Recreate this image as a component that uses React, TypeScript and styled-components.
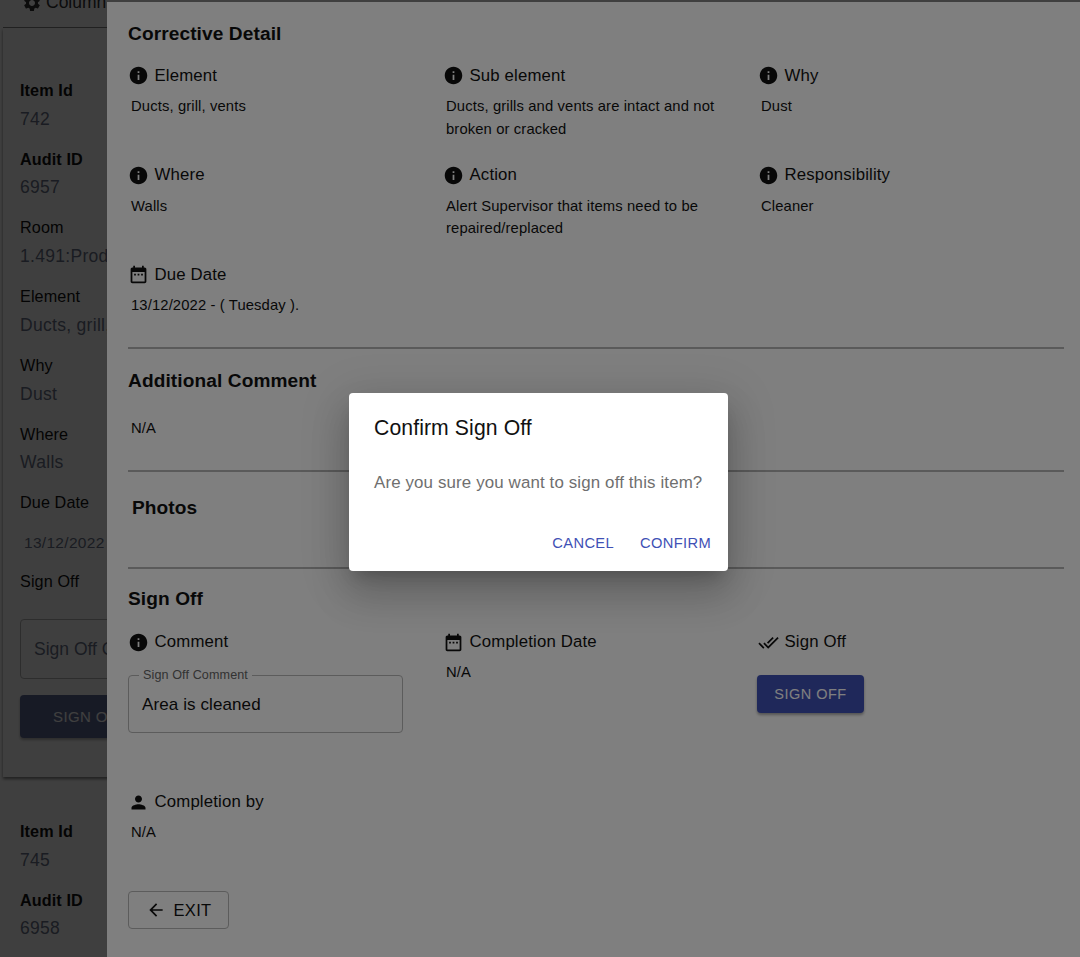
import React from "react";
import styled, { createGlobalStyle } from "styled-components";

const Global = createGlobalStyle`
  html, body { margin: 0; padding: 0; height: 957px; overflow: hidden; background: #fff; }
  body { font-family: "Liberation Sans", Arial, sans-serif; color: #000; }
  #root { height: 957px; }
`;

const Page = styled.div`
  position: relative;
  width: 1080px;
  height: 957px;
  overflow: hidden;
  background: #fff;
`;

const ListColumn = styled.div`
  height: 957px;
  overflow: hidden;
  padding: 0 0 0 3px;
  box-sizing: border-box;
`;

const ToolbarCard = styled.div`
  height: 28px;
  box-sizing: border-box;
  border-bottom: 1px solid #888;
  padding-left: 19px;
  display: flex;
  align-items: flex-end;
  font-size: 17.5px;
  overflow: hidden;
`;

const ToolbarInner = styled.div`
  display: flex;
  align-items: center;
  gap: 4px;
  margin-bottom: 14px;
  color: #333;
`;

const ItemCard = styled.div<{ $last?: boolean }>`
  padding: ${(p) => (p.$last ? "41px" : "49px")} 0 0 17px;
  height: ${(p) => (p.$last ? "auto" : "749px")};
  box-sizing: border-box;
  box-shadow: ${(p) => (p.$last ? "none" : "0 2px 3px rgba(0,0,0,.5)")};
`;

const FieldName = styled.div<{ $bold?: boolean }>`
  font-size: 16.2px;
  line-height: 27.7px;
  letter-spacing: 0.1px;
  font-weight: ${(p) => (p.$bold ? 700 : 400)};
  color: #111;
`;

const FieldValue = styled.div<{ $indent?: boolean }>`
  font-size: 17.5px;
  line-height: 28px;
  margin-bottom: 13px;
  white-space: nowrap;
  letter-spacing: 0.3px;
  color: #6a7288;
  padding-left: ${(p) => (p.$indent ? "4px" : "0")};
`;

const DateValue = styled(FieldValue)`
  font-size: 15.5px;
  margin: 12px 0 11px;
`;

const SignField = styled.div`
  width: 200px;
  height: 60px;
  box-sizing: border-box;
  border: 1px solid #b5b5b5;
  border-radius: 4px;
  padding-left: 13px;
  display: flex;
  align-items: center;
  font-size: 17.5px;
  color: #6a7288;
  white-space: nowrap;
  margin-top: 23px;
  padding-top: 2px;
`;

const SignButton = styled.div`
  width: 200px;
  height: 43px;
  margin-top: 16px;
  border-radius: 4px;
  background: #5f6a96;
  color: #fff;
  font-size: 15px;
  letter-spacing: 0.4px;
  padding-left: 33px;
  display: flex;
  align-items: center;
  box-sizing: border-box;
  box-shadow: 0 2px 3px rgba(0,0,0,.3);
`;

const Scrim = styled.div<{ $level: number }>`
  position: absolute;
  inset: 0;
  background: rgba(0, 0, 0, 0.5);
  z-index: ${(p) => p.$level};
`;

const Drawer = styled.aside`
  position: absolute;
  top: 2px;
  bottom: 0;
  left: 107px;
  right: 0;
  z-index: 2;
  background: #fff;
  padding: 18px 16px 0 21px;
  box-sizing: border-box;
  overflow: hidden;
`;

const SectionTitle = styled.h2<{ $inset?: boolean; $top?: number }>`
  margin: ${(p) => p.$top ?? 0}px 0 0;
  font-size: 19.1px;
  line-height: 28px;
  font-weight: 700;
  letter-spacing: 0.1px;
  color: #111;
  padding-left: ${(p) => (p.$inset ? "4px" : "0")};
`;

const DetailGrid = styled.div`
  display: grid;
  grid-template-columns: 315px 315px 305px;
  grid-template-rows: 99.5px 99.5px auto;
  margin-top: 13.5px;
`;

const SignGrid = styled(DetailGrid)`
  grid-template-rows: 160px auto;
  margin-top: 15px;
`;

const Cell = styled.div`
  display: flex;
  flex-direction: column;
  align-items: flex-start;
`;

const Label = styled.div`
  display: flex;
  align-items: center;
  gap: 6px;
  height: 28px;
  font-size: 16.8px;
  letter-spacing: 0.15px;
  color: #111;
  white-space: nowrap;
`;

const IconSlot = styled.span`
  width: 21px;
  height: 21px;
  display: inline-flex;
  color: #111;
  margin-left: -0.5px;
`;

const Value = styled.div<{ $top?: number }>`
  margin-top: ${(p) => p.$top ?? 5}px;
  padding-left: 3px;
  font-size: 14.8px;
  line-height: 22.5px;
  letter-spacing: 0.12px;
  color: #111;
  max-width: 290px;
`;

const Rule = styled.hr<{ $top: number }>`
  border: 0;
  height: 2px;
  background: #b4b4b4;
  margin: ${(p) => p.$top}px 0 0;
`;

const CommentField = styled.div`
  position: relative;
  width: 275px;
  height: 58px;
  margin-top: 19px;
  box-sizing: border-box;
  border: 1px solid #b8b8b8;
  border-radius: 4px;
  padding: 17px 13px 0;
  font-size: 17px;
  line-height: 24px;
  letter-spacing: 0.1px;
  color: #111;
`;

const FloatLabel = styled.span`
  position: absolute;
  top: -8px;
  left: 10px;
  padding: 0 4px;
  background: #fff;
  font-size: 12.6px;
  line-height: 14px;
  letter-spacing: 0.1px;
  color: #666;
  white-space: nowrap;
`;

const PrimaryButton = styled.button`
  margin: 19px 0 0 -1px;
  width: 107px;
  height: 38px;
  border: 0;
  border-radius: 4px;
  background: #3f51b5;
  color: #fff;
  font-family: inherit;
  font-size: 14.5px;
  letter-spacing: 0.5px;
  box-shadow: 0 2px 3px rgba(0,0,0,.35);
`;

const ExitButton = styled.button`
  margin-top: 47.5px;
  display: flex;
  align-items: center;
  justify-content: center;
  gap: 8px;
  width: 101px;
  height: 38px;
  background: #fff;
  border: 1px solid #b8b8b8;
  border-radius: 4px;
  font-family: inherit;
  font-size: 16.5px;
  letter-spacing: 0.3px;
  color: #111;
`;

const DialogLayer = styled.div`
  position: absolute;
  left: 349px;
  top: 393px;
  z-index: 4;
`;

const Dialog = styled.div`
  width: 379px;
  height: 178px;
  box-sizing: border-box;
  background: #fff;
  border-radius: 4px;
  padding: 21px 17px 0 25px;
  box-shadow: 0 11px 15px -7px rgba(0,0,0,.2), 0 24px 38px 3px rgba(0,0,0,.14), 0 9px 46px 8px rgba(0,0,0,.12);
  display: flex;
  flex-direction: column;
`;

const DialogTitle = styled.div`
  font-size: 21.2px;
  line-height: 28px;
  letter-spacing: 0.1px;
  color: #111;
`;

const DialogText = styled.div`
  margin-top: 27px;
  font-size: 16.9px;
  line-height: 28px;
  letter-spacing: 0.13px;
  color: #6f6f6f;
  white-space: nowrap;
`;

const DialogActions = styled.div`
  margin-top: 36px;
  display: flex;
  justify-content: flex-end;
  gap: 26px;
`;

const TextButton = styled.span`
  font-size: 14.7px;
  line-height: 20px;
  letter-spacing: 0.35px;
  color: #3f51b5;
`;

const InfoIcon = () => (
  <IconSlot>
    <svg viewBox="0 0 24 24" width="21" height="21" fill="currentColor">
      <path d="M12 2C6.48 2 2 6.48 2 12s4.48 10 10 10 10-4.48 10-10S17.52 2 12 2zm1 15h-2v-6h2v6zm0-8h-2V7h2v2z" />
    </svg>
  </IconSlot>
);

const CalendarIcon = () => (
  <IconSlot>
    <svg viewBox="0 0 24 24" width="21" height="21" fill="currentColor">
      <path d="M9 11H7v2h2v-2zm4 0h-2v2h2v-2zm4 0h-2v2h2v-2zm2-7h-1V2h-2v2H8V2H6v2H5c-1.11 0-1.99.9-1.99 2L3 20c0 1.1.89 2 2 2h14c1.1 0 2-.9 2-2V6c0-1.1-.9-2-2-2zm0 16H5V9h14v11z" />
    </svg>
  </IconSlot>
);

const PersonIcon = () => (
  <IconSlot>
    <svg viewBox="0 0 24 24" width="21" height="21" fill="currentColor">
      <path d="M12 12c2.21 0 4-1.79 4-4s-1.79-4-4-4-4 1.79-4 4 1.79 4 4 4zm0 2c-2.67 0-8 1.34-8 4v2h16v-2c0-2.66-5.33-4-8-4z" />
    </svg>
  </IconSlot>
);

const DoneAllIcon = () => (
  <IconSlot>
    <svg viewBox="0 0 24 24" width="21" height="21" fill="currentColor">
      <path d="M18 7l-1.41-1.41-6.34 6.34 1.41 1.41L18 7zm4.24-1.41L11.66 16.17 7.48 12l-1.41 1.41L11.66 19l12-12-1.42-1.41zM.41 13.41L6 19l1.41-1.41L1.83 12 .41 13.41z" />
    </svg>
  </IconSlot>
);

const GearIcon = () => (
  <svg viewBox="0 0 24 24" width="20" height="20" fill="currentColor">
    <path d="M19.14 12.94c.04-.3.06-.61.06-.94 0-.32-.02-.64-.07-.94l2.03-1.58c.18-.14.23-.41.12-.61l-1.92-3.32c-.12-.22-.37-.29-.59-.22l-2.39.96c-.5-.38-1.03-.7-1.62-.94l-.36-2.54c-.04-.24-.24-.41-.48-.41h-3.84c-.24 0-.43.17-.47.41l-.36 2.54c-.59.24-1.13.57-1.62.94l-2.39-.96c-.22-.08-.47 0-.59.22L2.74 8.87c-.12.21-.08.47.12.61l2.03 1.58c-.05.3-.09.63-.09.94s.02.64.07.94l-2.03 1.58c-.18.14-.23.41-.12.61l1.92 3.32c.12.22.37.29.59.22l2.39-.96c.5.38 1.03.7 1.62.94l.36 2.54c.05.24.24.41.48.41h3.84c.24 0 .44-.17.47-.41l.36-2.54c.59-.24 1.13-.56 1.62-.94l2.39.96c.22.08.47 0 .59-.22l1.92-3.32c.12-.22.07-.47-.12-.61l-2.01-1.58zM12 15.6c-1.98 0-3.6-1.62-3.6-3.6s1.62-3.6 3.6-3.6 3.6 1.62 3.6 3.6-1.62 3.6-3.6 3.6z" />
  </svg>
);

const ArrowIcon = () => (
  <svg viewBox="0 0 24 24" width="20" height="20" fill="currentColor">
    <path d="M20 11H7.83l5.59-5.59L12 4l-8 8 8 8 1.41-1.41L7.83 13H20v-2z" />
  </svg>
);

type Detail = { icon: React.ReactNode; label: string; value: string };

const details: Detail[] = [
  { icon: <InfoIcon />, label: "Element", value: "Ducts, grill, vents" },
  { icon: <InfoIcon />, label: "Sub element", value: "Ducts, grills and vents are intact and not broken or cracked" },
  { icon: <InfoIcon />, label: "Why", value: "Dust" },
  { icon: <InfoIcon />, label: "Where", value: "Walls" },
  { icon: <InfoIcon />, label: "Action", value: "Alert Supervisor that items need to be repaired/replaced" },
  { icon: <InfoIcon />, label: "Responsibility", value: "Cleaner" },
  { icon: <CalendarIcon />, label: "Due Date", value: "13/12/2022 - ( Tuesday )." },
];

export default function App() {
  return (
    <Page>
      <Global />
      <ListColumn>
        <ToolbarCard>
          <ToolbarInner>
            <GearIcon />
            Column
          </ToolbarInner>
        </ToolbarCard>
        <ItemCard>
          <FieldName $bold>Item Id</FieldName>
          <FieldValue>742</FieldValue>
          <FieldName $bold>Audit ID</FieldName>
          <FieldValue>6957</FieldValue>
          <FieldName>Room</FieldName>
          <FieldValue>1.491:Production</FieldValue>
          <FieldName>Element</FieldName>
          <FieldValue>Ducts, grill, vents</FieldValue>
          <FieldName>Why</FieldName>
          <FieldValue>Dust</FieldValue>
          <FieldName>Where</FieldName>
          <FieldValue>Walls</FieldValue>
          <FieldName>Due Date</FieldName>
          <DateValue $indent>13/12/2022</DateValue>
          <FieldName>Sign Off</FieldName>
          <SignField>Sign Off Comment</SignField>
          <SignButton>SIGN OFF</SignButton>
        </ItemCard>
        <ItemCard $last>
          <FieldName $bold>Item Id</FieldName>
          <FieldValue>745</FieldValue>
          <FieldName $bold>Audit ID</FieldName>
          <FieldValue>6958</FieldValue>
        </ItemCard>
      </ListColumn>

      <Scrim $level={1} />

      <Drawer>
        <SectionTitle>Corrective Detail</SectionTitle>
        <DetailGrid>
          {details.map((d) => (
            <Cell key={d.label}>
              <Label>
                {d.icon}
                {d.label}
              </Label>
              <Value $top={5.5}>{d.value}</Value>
            </Cell>
          ))}
        </DetailGrid>
        <Rule $top={30.5} />
        <SectionTitle $top={18}>Additional Comment</SectionTitle>
        <Value $top={22}>N/A</Value>
        <Rule $top={30} />
        <SectionTitle $inset $top={22.5}>Photos</SectionTitle>
        <Rule $top={44.5} />
        <SectionTitle $top={16.5}>Sign Off</SectionTitle>
        <SignGrid>
          <Cell>
            <Label>
              <InfoIcon />
              Comment
            </Label>
            <CommentField>
              <FloatLabel>Sign Off Comment</FloatLabel>
              Area is cleaned
            </CommentField>
          </Cell>
          <Cell>
            <Label>
              <CalendarIcon />
              Completion Date
            </Label>
            <Value>N/A</Value>
          </Cell>
          <Cell>
            <Label>
              <DoneAllIcon />
              Sign Off
            </Label>
            <PrimaryButton>SIGN OFF</PrimaryButton>
          </Cell>
          <Cell>
            <Label>
              <PersonIcon />
              Completion by
            </Label>
            <Value>N/A</Value>
          </Cell>
        </SignGrid>
        <ExitButton>
          <ArrowIcon />
          EXIT
        </ExitButton>
      </Drawer>

      <Scrim $level={3} />

      <DialogLayer>
        <Dialog>
          <DialogTitle>Confirm Sign Off</DialogTitle>
          <DialogText>Are you sure you want to sign off this item?</DialogText>
          <DialogActions>
            <TextButton>CANCEL</TextButton>
            <TextButton>CONFIRM</TextButton>
          </DialogActions>
        </Dialog>
      </DialogLayer>
    </Page>
  );
}
